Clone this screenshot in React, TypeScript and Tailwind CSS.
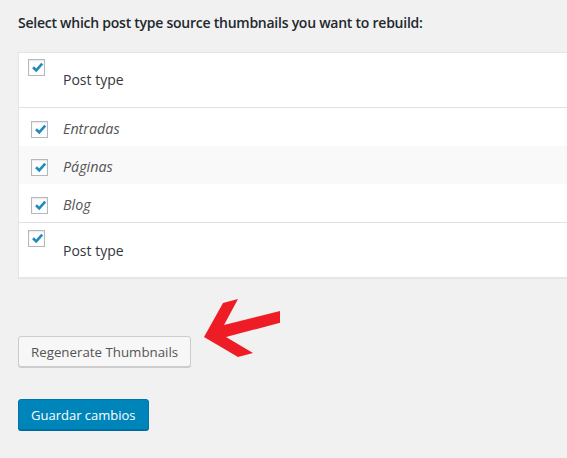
function Check() {
  return (
    <span className="flex h-[17px] w-[17px] shrink-0 border border-[#b4b9be] bg-white shadow-[inset_0_1px_2px_rgba(0,0,0,0.1)]">
      <svg viewBox="0 0 15 15" className="h-[15px] w-[15px]">
        <polyline
          points="4,7.3 7.2,10.3 13.2,3.6"
          fill="none"
          stroke="#1e8cbe"
          strokeWidth="2.6"
          strokeLinecap="butt"
          strokeLinejoin="miter"
        />
      </svg>
    </span>
  )
}

const types = ['Entradas', 'Páginas', 'Blog']

export default function App() {
  return (
    <div className="min-h-[458px] overflow-hidden bg-[#f1f1f1] pl-[18px] pt-[14px] text-[#444] [font-family:'Open_Sans',sans-serif]">
      <h2 className="text-[14px] font-semibold leading-[17px] tracking-[-0.25px] text-[#23282d]">
        Select which post type source thumbnails you want to rebuild:
      </h2>

      <div className="mt-[21px] w-[600px] border border-[#e5e5e5] bg-white shadow-[0_1px_1px_rgba(0,0,0,0.04)]">
        <div className="flex h-[55px] gap-[18px] border-b border-[#e1e1e1] pl-[9px] pt-[6px]">
          <Check />
          <span className="pt-[11px] text-[14px] leading-[20px] text-[#32373c]">Post type</span>
        </div>
        {types.map((t, i) => (
          <div
            key={t}
            className={`flex h-[38px] items-center gap-[15px] pl-[12px] pt-[4px] ${i === 1 ? 'bg-[#f9f9f9]' : ''}`}
          >
            <Check />
            <span className="text-[14.3px] italic leading-[20px] text-[#555]">{t}</span>
          </div>
        ))}
        <div className="flex h-[55px] gap-[18px] border-t border-[#e1e1e1] pl-[9px] pt-[7px]">
          <Check />
          <span className="pt-[11px] text-[14px] leading-[20px] text-[#32373c]">Post type</span>
        </div>
      </div>

      <div className="relative mt-[58px]">
        <button className="h-[31px] rounded-[3px] border border-[#ccc] bg-[#f7f7f7] px-[12px] text-[13.3px] leading-[28px] text-[#555] shadow-[0_1px_0_#ccc]">
          Regenerate Thumbnails
        </button>
        <svg
          width="90"
          height="62"
          viewBox="190 298 90 62"
          className="absolute left-[172px] top-[-38px]"
        >
          <path
            d="M204 337 L223 303 L238 299 L224 325 L280 311 L283 322 L226 337 L253 353 L238 357 Z"
            fill="#ee1c25"
          />
        </svg>
      </div>

      <button className="mt-[32px] h-[31px] rounded-[3px] border border-[#0073aa] bg-[#0085ba] px-[12px] text-[13px] leading-[28px] text-white shadow-[0_1px_0_#006799]">
        Guardar cambios
      </button>
    </div>
  )
}
